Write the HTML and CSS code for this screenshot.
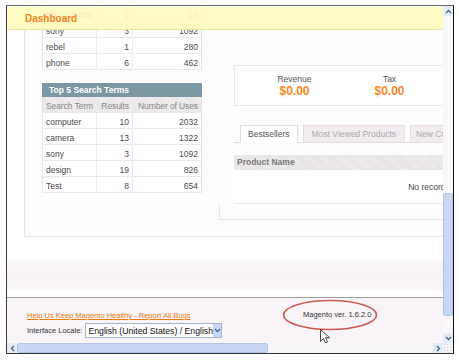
FILE: index.html
```html
<!DOCTYPE html>
<html lang="en">
<head>
    <meta charset="UTF-8">
    <title>Magento Admin - Dashboard</title>
    <link rel="stylesheet" href="styles.css">
</head>
<body>
    <div class="window">
        <div class="viewport">
            <!-- Плавающий заголовок поверх контента -->
            <div class="titlebar"><h1>Dashboard</h1></div>

            <div class="dash">
                <div class="dash-left">
                    <div class="grid">
                        <div class="row"><span>nikon d5000</span><span class="num">1</span><span class="num">22</span></div>
                        <div class="row"><span>sony</span><span class="num">3</span><span class="num">1092</span></div>
                        <div class="row"><span>rebel</span><span class="num">1</span><span class="num">280</span></div>
                        <div class="row"><span>phone</span><span class="num">6</span><span class="num">462</span></div>
                    </div>

                    <div class="box-head">Top 5 Search Terms</div>
                    <div class="grid">
                        <div class="row row-head"><span>Search Term</span><span class="num">Results</span><span class="num">Number of Uses</span></div>
                        <div class="row"><span>computer</span><span class="num">10</span><span class="num">2032</span></div>
                        <div class="row"><span>camera</span><span class="num">13</span><span class="num">1322</span></div>
                        <div class="row"><span>sony</span><span class="num">3</span><span class="num">1092</span></div>
                        <div class="row"><span>design</span><span class="num">19</span><span class="num">826</span></div>
                        <div class="row"><span>Test</span><span class="num">8</span><span class="num">654</span></div>
                    </div>
                </div>

                <div class="dash-right">
                    <div class="totals">
                        <div class="total"><span class="total-label">Revenue</span><span class="total-value">$0.00</span></div>
                        <div class="total"><span class="total-label">Tax</span><span class="total-value">$0.00</span></div>
                    </div>

                    <ul class="tabs">
                        <li class="tab active">Bestsellers</li>
                        <li class="tab">Most Viewed Products</li>
                        <li class="tab">New Customers</li>
                    </ul>

                    <div class="products">
                        <div class="products-head">Product Name</div>
                        <div class="products-empty">No records found.</div>
                    </div>
                    <div class="products-foot"></div>
                </div>
            </div>

            <div class="band"></div>

            <div class="footer">
                <div class="footer-left">
                    <a href="#" class="bugs">Help Us Keep Magento Healthy - Report All Bugs</a>
                    <div class="locale">
                        <span>Interface Locale:</span>
                        <div class="select">
                            <span>English (United States) / English</span>
                            <span class="select-btn">
                                <svg width="7" height="5" viewBox="0 0 7 5"><path d="M1 1l2.5 2.5L6 1" fill="none" stroke="#4d6185" stroke-width="1.3"/></svg>
                            </span>
                        </div>
                    </div>
                </div>
                <div class="version">Magento ver. 1.6.2.0</div>

                <svg class="ellipse" width="96" height="32" viewBox="0 0 96 32">
                    <ellipse cx="48" cy="16" rx="46.5" ry="14.5" fill="none" stroke="#cc5752" stroke-width="1.6"/>
                </svg>
                <svg class="cursor" width="11" height="15" viewBox="0 0 11 15">
                    <path d="M0.5 0.5v12l3-3 2 4.5 2-1-2-4.3h4z" fill="#fff" stroke="#333" stroke-width="0.9"/>
                </svg>
            </div>
        </div>

        <div class="vscroll">
            <div class="sbtn">
                <svg width="7" height="5" viewBox="0 0 7 5"><path d="M1 4l2.5-2.5L6 4" fill="none" stroke="#4d6185" stroke-width="1.3"/></svg>
            </div>
            <div class="vtrack"><div class="vthumb"></div></div>
            <div class="sbtn">
                <svg width="7" height="5" viewBox="0 0 7 5"><path d="M1 1l2.5 2.5L6 1" fill="none" stroke="#4d6185" stroke-width="1.3"/></svg>
            </div>
        </div>

        <div class="hscroll">
            <div class="sbtn">
                <svg width="5" height="7" viewBox="0 0 5 7"><path d="M4 1L1.5 3.5 4 6" fill="none" stroke="#4d6185" stroke-width="1.3"/></svg>
            </div>
            <div class="htrack"><div class="hthumb"></div></div>
            <div class="sbtn">
                <svg width="5" height="7" viewBox="0 0 5 7"><path d="M1 1l2.5 2.5L1 6" fill="none" stroke="#4d6185" stroke-width="1.3"/></svg>
            </div>
        </div>

        <div class="corner"></div>
    </div>
</body>
</html>
```

FILE: styles.css
```css
body {
    margin: 0;
    background: #fff;
    font-family: 'Liberation Sans', Arial, sans-serif;
    color: #444;
}

.window {
    display: grid;
    grid-template-columns: 436px 10px;
    grid-template-rows: 337px 10px;
    width: 446px;
    margin: 5px 0 0 6px;
    border-top: 1px solid #6a6a6a;
    border-left: 1px solid #3a3a3a;
    border-right: 1px solid #111;
    border-bottom: 1px solid #333;
}

.viewport {
    position: relative;
    overflow: hidden;
    background: #fff;
}

/* Заголовок */
.titlebar {
    position: absolute;
    top: 1px;
    left: 0;
    right: 0;
    height: 22px;
    background: rgba(255, 252, 190, 0.92);
    border-bottom: 1px solid #ece3a8;
    z-index: 2;
}

.titlebar h1 {
    margin: 0;
    padding-left: 18px;
    font-size: 10px;
    line-height: 23px;
    color: #f5821f;
}

/* Основная панель */
.dash {
    display: flex;
    height: 231px;
    box-sizing: border-box;
    margin-left: 17px;
    border-left: 1px solid #e6e6e6;
    border-bottom: 1px solid #e3e3e3;
    background: #fdfdfd;
    font-size: 8.5px;
}

.dash-left {
    width: 160px;
    flex: none;
    padding-left: 17px;
}

.grid {
    width: 160px;
    box-sizing: border-box;
    border-left: 1px solid #e4e4e4;
    border-right: 1px solid #e4e4e4;
    background: #fff;
}

.row {
    display: grid;
    grid-template-columns: 54px 36px 68px;
    height: 16px;
    box-sizing: border-box;
    border-bottom: 1px solid #e9e9e9;
    line-height: 19px;
    color: #4a4a4a;
}

.row span {
    padding: 0 3px;
    border-right: 1px solid #ececec;
    white-space: nowrap;
    overflow: hidden;
}

.row span:last-child {
    border-right: none;
}

.row .num {
    text-align: right;
}

.row-head {
    background: repeating-linear-gradient(45deg, #f1eff0 0 1px, #e7e4e6 1px 2px);
    color: #878787;
    letter-spacing: -0.1px;
}

.box-head {
    margin-top: 13px;
    width: 160px;
    height: 14px;
    line-height: 15px;
    padding-left: 7px;
    box-sizing: border-box;
    background: #7b97a1;
    color: #fff;
    font-weight: bold;
}

.dash-right {
    flex: none;
    width: 420px;
    margin-left: 32px;
}

.totals {
    display: flex;
    margin-top: 59px;
    height: 41px;
    padding: 8px 0 0 12px;
    box-sizing: border-box;
    border: 1px solid #e6e6e6;
    background: #fff;
}

.total {
    width: 95px;
    display: flex;
    flex-direction: column;
    align-items: center;
}

.total-label {
    line-height: 10px;
    color: #555;
}

.total-value {
    font-size: 12px;
    line-height: 14px;
    font-weight: bold;
    color: #f7891f;
}

.tabs {
    display: flex;
    gap: 5px;
    list-style: none;
    margin: 19px 0 0;
    padding: 0 0 0 6px;
    border-bottom: 1px solid #dedede;
}

.tab {
    height: 17px;
    line-height: 16px;
    padding: 0 7px;
    box-sizing: border-box;
    border: 1px solid #e6dee3;
    border-bottom: none;
    background: #f2ecf0;
    color: #aaa;
}

.tab:nth-child(2) {
    padding: 0 8px;
}

.tab:nth-child(3) {
    padding: 0 5px;
}

.tab.active {
    height: 18px;
    margin-bottom: -1px;
    border-color: #dedede;
    background: #fff;
    color: #555;
}

.products {
    width: 416px;
    margin-top: 12px;
    background: #fff;
}

.products-head {
    height: 15px;
    line-height: 15px;
    padding-left: 3px;
    background: repeating-linear-gradient(45deg, #efecee 0 1px, #e5e1e4 1px 2px);
    color: #7a7a7a;
    font-weight: bold;
}

.products-empty {
    height: 34px;
    box-sizing: border-box;
    padding-top: 12px;
    border-bottom: 1px solid #ebebeb;
    text-align: center;
    color: #444;
}

.products-foot {
    height: 16px;
    margin-left: -15px;
    box-sizing: border-box;
    border-left: 1px solid #e6e6e6;
    border-bottom: 1px solid #e3e3e3;
}

/* Нижняя полоса и подвал */
.band {
    height: 61px;
    box-sizing: border-box;
    border-bottom: 1px solid #9c9c9c;
    background: linear-gradient(#fff 0 22px, #faf6f9 26px, #f7f2f6 40px, #faf7f9 52px, #fff 55px);
}

.footer {
    position: relative;
    display: flex;
    height: 45px;
    background: #f8f4f7;
    font-size: 7.5px;
}

.footer-left {
    width: 215px;
    padding: 13px 0 0 20px;
}

.bugs {
    display: block;
    line-height: 10px;
    color: #ea7a0e;
}

.locale {
    display: flex;
    align-items: center;
    gap: 3px;
    margin-top: 2px;
    color: #333;
}

.select {
    display: flex;
    align-items: center;
    justify-content: space-between;
    width: 137px;
    height: 15px;
    box-sizing: border-box;
    padding-left: 2px;
    border: 1px solid #a6b5cc;
    background: #fff;
    font-size: 8.7px;
    color: #111;
    white-space: nowrap;
}

.select-btn {
    display: flex;
    align-items: center;
    justify-content: center;
    width: 11px;
    height: 13px;
    background: #c9d8f7;
}

.version {
    margin-left: 61px;
    padding-top: 12px;
    line-height: 10px;
    color: #333;
}

.ellipse {
    position: absolute;
    left: 275px;
    top: 1px;
}

.cursor {
    position: absolute;
    left: 313px;
    top: 31px;
}

/* Полосы прокрутки */
.vscroll,
.hscroll {
    display: flex;
    background: #f8f8fa;
}

.vscroll {
    flex-direction: column;
}

.sbtn {
    display: flex;
    align-items: center;
    justify-content: center;
    flex: none;
    width: 10px;
    height: 10px;
    background: #e3eaf8;
}

.vtrack,
.htrack {
    flex: 1;
}

.vthumb {
    margin-top: 177px;
    height: 123px;
    box-sizing: border-box;
    border: 1px solid #b3c4ea;
    border-radius: 2px;
    background: #c9d7f5;
}

.hthumb {
    width: 251px;
    height: 10px;
    box-sizing: border-box;
    border: 1px solid #b3c4ea;
    border-radius: 2px;
    background: #c9d7f5;
}

.corner {
    background: radial-gradient(#c6c6c6 0.8px, transparent 1px) 0 0 / 3px 3px #f4f4f4;
}
```
